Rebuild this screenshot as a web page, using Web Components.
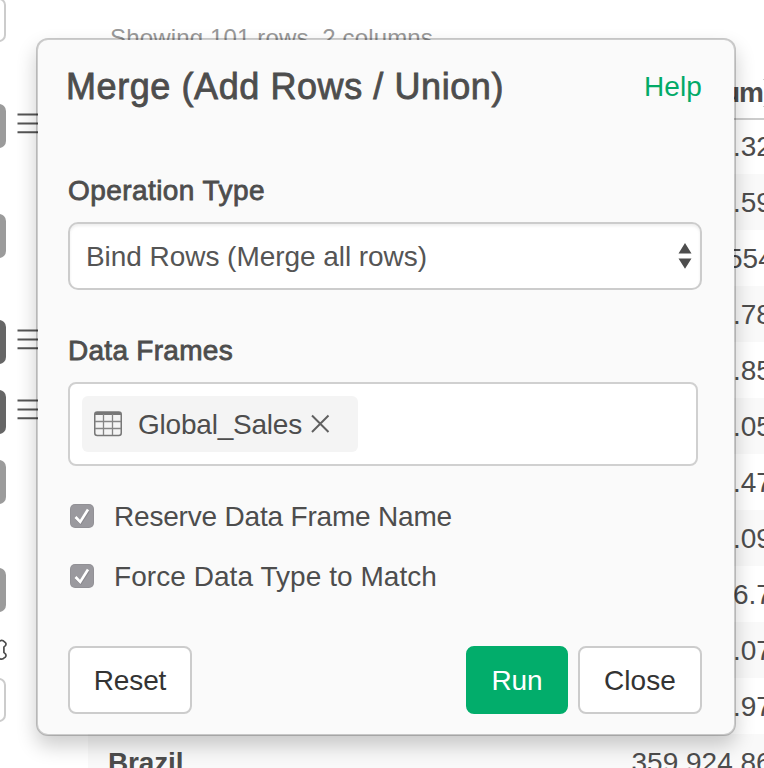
<!DOCTYPE html>
<html lang="en">
<head>
<meta charset="utf-8">
<title>Merge (Add Rows / Union)</title>
<style>
html,body{margin:0;height:768px;overflow:hidden;background:#fff}
body{font-family:"Liberation Sans",Arial,sans-serif;font-size:28px;color:#4d4d4d}
</style>
</head>
<body>
<merge-screen></merge-screen>
<script>
function define(name, html, setup) {
  const t = document.createElement('template');
  t.innerHTML = html;
  customElements.define(name, class extends HTMLElement {
    connectedCallback() {
      if (this.shadowRoot) return;
      this.attachShadow({mode: 'open'}).appendChild(t.content.cloneNode(true));
      if (setup) setup(this, this.shadowRoot);
    }
  });
}

/* One line of text tracked to fill the width given in its attribute. */
define('fit-text', `<style>
:host{display:block;white-space:pre;box-sizing:border-box;height:var(--lh,40px);line-height:var(--lh,40px);padding-top:1px}
:host([medium]) span{-webkit-text-stroke:.8px currentColor}
span{display:inline-block}
</style><span><slot></slot></span>`, (el, root) => {
  const span = root.querySelector('span');
  const want = +el.getAttribute('width');
  const count = +el.getAttribute('chars') || el.textContent.length;
  const gap = (want - span.getBoundingClientRect().width) / count;
  span.style.letterSpacing = gap + 'px';
});

define('step-chip', `<style>
:host{display:block;height:44px;position:relative}
i{display:block;box-sizing:border-box;width:26px;height:44px;margin-left:-20px;border-radius:7px;background:#9b9b9b}
:host([tone=dark]) i{background:#666}
:host([tone=empty]) i{background:#fff;border:2px solid #ccc}
svg{position:absolute;left:17px;top:9px;display:none}
:host([grip]) svg{display:block}
</style><i></i><svg width="24" height="22"><path d="M.5 1.500h24M.5 10.500h24M.5 19.200h24" stroke="#555" stroke-width="2"/></svg>`);

define('side-bar', `<style>
:host{display:flex;flex-direction:column;width:88px;height:768px;overflow:hidden;flex:none}
.gear{display:block;margin:26px 0 16px;height:24px}
</style>
<step-chip tone="empty" style="margin-top:-2px"></step-chip>
<step-chip grip style="margin-top:62px"></step-chip>
<step-chip style="margin-top:66px"></step-chip>
<step-chip tone="dark" grip style="margin-top:62px"></step-chip>
<step-chip tone="dark" grip style="margin-top:26px"></step-chip>
<step-chip style="margin-top:26px"></step-chip>
<step-chip style="margin-top:64px"></step-chip>
<svg class="gear" width="10" height="24"><path d="M-1 4C0 2 3 2 4.300 3.700C5.800 4.500 6.500 6 5.500 7.500L3.900 9V14.500L5.500 16C6.500 17.500 5.800 19 4.300 19.800C3 21.500 0 21.500-1 19.800" fill="none" stroke="#4d4d4d" stroke-width="1.700"/></svg>
<step-chip tone="empty"></step-chip>`);

define('data-row', `<style>
:host{display:grid;grid-template-columns:1fr auto;height:56px;box-sizing:border-box;padding-top:1px;line-height:56px;white-space:pre;overflow:hidden}
:host([alt]){background:#f9f9f9}
b{padding-left:20px}
</style><b><slot name="name"></slot></b><slot></slot>`);

define('data-table', `<style>
:host{display:block;flex:1;min-width:0;overflow:hidden}
.sum{padding:17px 0 1px 22px;color:#999;font-size:24px;height:40px}
.head{height:62px;box-sizing:border-box;border-bottom:2px solid #ccc;display:flex;justify-content:flex-end;align-items:flex-start;font-weight:bold;line-height:60px;overflow:hidden;margin-bottom:-2px}
.head span{height:60px;margin-top:5px;width:40px;letter-spacing:-1.200px}
.head i{width:1px;height:28px;margin-top:21px;box-sizing:border-box;border:solid #ccc;border-width:1px 0}
.head span,.head i{flex:none}
data-row span{overflow:hidden}
</style>
<div class="sum"><fit-text width="323">Showing 101 rows, 2 columns</fit-text></div>
<div class="head"><span>um</span><i></i></div>
<div id="rows"></div>`, (el, root) => {
  /* Each value with the x at which its first character begins. */
  const values = [['.32',733], ['.59',733], ['554',727], ['.78',733], ['.85',733], ['.05',733], ['.47',733], ['.09',733], ['6.7',733], ['.07',733], ['.97',733], ['359,924.86',631.5]];
  const box = root.getElementById('rows');
  values.forEach(([text, left], i) => {
    const row = document.createElement('data-row');
    if (i % 2) row.setAttribute('alt', '');
    const cell = document.createElement('span');
    cell.style.width = (764 - left) + 'px';
    cell.textContent = text;
    row.append(cell);
    if (text === '359,924.86') {
      const name = document.createElement('span');
      name.slot = 'name';
      name.textContent = 'Brazil';
      name.style.letterSpacing = '-.15px';
      row.append(name);
    }
    box.append(row);
  });
});

define('push-button', `<style>
:host{display:flex;box-sizing:border-box;height:68px;border:2px solid #ccc;border-radius:8px;background:#fff;color:#333;align-items:center;justify-content:center}
:host([primary]){background:#02ad6b;border-color:#02ad6b;color:#fff}
</style><slot></slot>`);

define('select-box', `<style>
:host{display:flex;box-sizing:border-box;height:68px;border:2px solid #ccc;border-radius:10px;background:#fff;box-shadow:inset 0 2px 3px rgba(0,0,0,.07);align-items:center;justify-content:space-between;padding:0 8px 0 16px;color:#555}
</style><slot></slot><svg width="14" height="26"><path d="M7 0L13.500 10.500H.5ZM7 25.700L.5 15.500H13.500Z" fill="#4d4d4d"/></svg>`);

define('frame-tag', `<style>
:host{display:flex;box-sizing:border-box;width:276px;height:56px;border-radius:6px;background:#f4f4f4;align-items:center;padding-left:12px}
.x{margin-left:8px}fit-text{margin-left:16px}
</style>
<svg width="28" height="26"><path d="M1 3Q1 1 3 1H25Q27 1 27 3V4H1Z" fill="#777"/><rect x=".75" y="1" width="26.500" height="23.500" rx="2.500" fill="none" stroke="#777" stroke-width="1.500"/><path d="M9.500 3V24M18.500 3V24M1 10.500H27M1 17.500H27" stroke="#858585" stroke-width="1.300"/></svg>
<fit-text width="164" chars="12"><slot></slot></fit-text>
<svg class="x" width="20" height="20"><path d="M2 1.500L18.500 18M18.500 1.500L2 18" stroke="#606060" stroke-width="2"/></svg>`);

define('check-line', `<style>
:host{display:flex;height:60px;align-items:center;gap:20px;padding-left:2px}
</style><svg width="24" height="24"><rect width="24" height="24" rx="5" fill="#929196"/><rect x="1" y="1" width="22" height="22" rx="4" fill="#9a999e"/><path d="M6 14.500L10.700 19L18.500 7" fill="none" stroke="#77767b" stroke-width="2.500" opacity=".5"/><path d="M5.500 13L10.200 18L18 5.500" fill="none" stroke="#fff" stroke-width="2.600"/></svg><slot></slot>`);

define('merge-dialog', `<style>
:host{position:absolute;left:36px;top:38px;box-sizing:border-box;width:700px;height:698px;border:2px solid rgba(0,0,0,.2);border-radius:12px;background:#fafafa;background-clip:padding-box;box-shadow:0 10px 20px rgba(0,0,0,.2);padding:0 32px 0 30px;display:flex;flex-direction:column}
header{display:flex;justify-content:space-between;height:92px;margin-left:-2px}
h1{font:inherit;font-size:36px;margin:0}
a{color:#02aa68}
.frames{box-sizing:border-box;width:630px;height:84px;border:2px solid #d0d0d0;border-radius:8px;background:#fff;padding:12px}
.checks{margin-top:20px}
footer{display:grid;grid-template-columns:124px 1fr 102px 124px;column-gap:10px;margin-top:40px}
footer :nth-child(2){grid-column:3}
</style>
<header><h1><fit-text medium width="438" style="--lh:92px">Merge (Add Rows / Union)</fit-text></h1><a><fit-text width="58" style="--lh:92px">Help</fit-text></a></header>
<fit-text medium width="197" style="margin-top:38px">Operation Type</fit-text>
<select-box style="margin-top:12px"><fit-text width="341">Bind Rows (Merge all rows)</fit-text></select-box>
<fit-text medium width="165" style="margin-top:40px">Data Frames</fit-text>
<div class="frames" style="margin-top:12px"><frame-tag>Global_Sales</frame-tag></div>
<div class="checks"><check-line><fit-text width="338">Reserve Data Frame Name</fit-text></check-line><check-line><fit-text width="323">Force Data Type to Match</fit-text></check-line></div>
<footer><push-button><fit-text width="72.5">Reset</fit-text></push-button><push-button primary><fit-text width="51">Run</fit-text></push-button><push-button><fit-text width="72">Close</fit-text></push-button></footer>`);

define('merge-screen', `<style>
:host{display:flex;position:relative;width:764px;height:768px;overflow:hidden;background:#fff}
</style><side-bar></side-bar><data-table></data-table><merge-dialog></merge-dialog>`);
</script>
</body>
</html>
